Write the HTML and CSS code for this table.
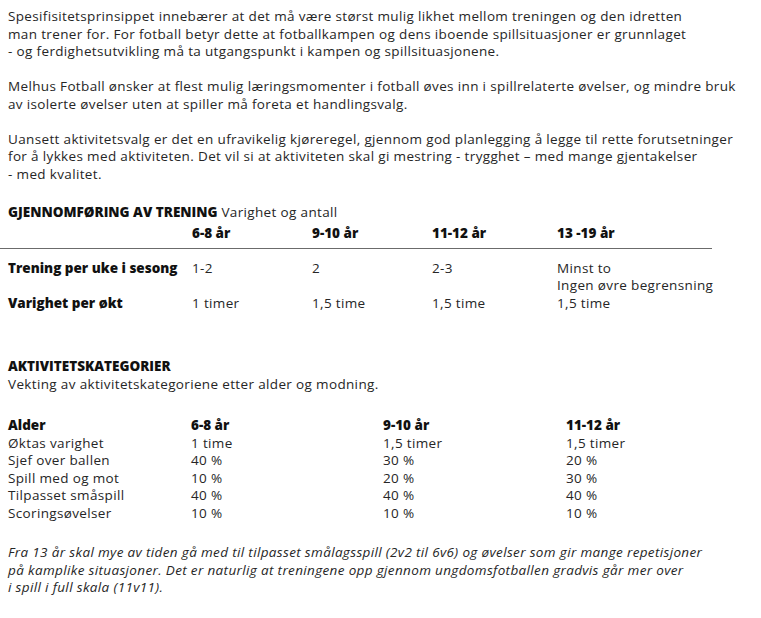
FILE: index.html
```html
<!DOCTYPE html>
<html lang="no">
<head>
<meta charset="utf-8">
<link rel="stylesheet" href="styles.css">
</head>
<body>
<div class="page">
  <p class="para">Spesifisitetsprinsippet innebærer at det må være størst mulig likhet mellom treningen og den idretten<br>man trener for. For fotball betyr dette at fotballkampen og dens iboende spillsituasjoner er grunnlaget<br>- og ferdighetsutvikling må ta utgangspunkt i kampen og spillsituasjonene.</p>
  <p class="para">Melhus Fotball ønsker at flest mulig læringsmomenter i fotball øves inn i spillrelaterte øvelser, og mindre bruk<br>av isolerte øvelser uten at spiller må foreta et handlingsvalg.</p>
  <p class="para">Uansett aktivitetsvalg er det en ufravikelig kjøreregel, gjennom god planlegging å legge til rette forutsetninger<br>for å lykkes med aktiviteten. Det vil si at aktiviteten skal gi mestring - trygghet – med mange gjentakelser<br>- med kvalitet.</p>

  <h2 class="heading plan-title"><b>GJENNOMFØRING AV TRENING</b> Varighet og antall</h2>
  <div class="plan">
    <div class="plan-head">
      <span></span><b>6-8 år</b><b>9-10 år</b><b>11-12 år</b><b>13 -19 år</b>
    </div>
    <div class="plan-row first">
      <b>Trening per uke i sesong</b><span>1-2</span><span>2</span><span>2-3</span><span>Minst to<br>Ingen øvre begrensning</span>
    </div>
    <div class="plan-row">
      <b>Varighet per økt</b><span>1 timer</span><span>1,5 time</span><span>1,5 time</span><span>1,5 time</span>
    </div>
  </div>

  <h2 class="heading cat">AKTIVITETSKATEGORIER</h2>
  <p class="sub">Vekting av aktivitetskategoriene etter alder og modning.</p>

  <div class="cats">
    <b>Alder</b><b>6-8 år</b><b>9-10 år</b><b>11-12 år</b>
    <span>Øktas varighet</span><span>1 time</span><span>1,5 timer</span><span>1,5 timer</span>
    <span>Sjef over ballen</span><span>40 %</span><span>30 %</span><span>20 %</span>
    <span>Spill med og mot</span><span>10 %</span><span>20 %</span><span>30 %</span>
    <span>Tilpasset småspill</span><span>40 %</span><span>40 %</span><span>40 %</span>
    <span>Scoringsøvelser</span><span>10 %</span><span>10 %</span><span>10 %</span>
  </div>

  <p class="note">Fra 13 år skal mye av tiden gå med til tilpasset smålagsspill (2v2 til 6v6) og øvelser som gir mange repetisjoner<br>på kamplike situasjoner. Det er naturlig at treningene opp gjennom ungdomsfotballen gradvis går mer over<br>i spill i full skala (11v11).</p>
</div>
</body>
</html>
```
FILE: styles.css
```css
html, body {
  margin: 0;
  padding: 0;
  background: #ffffff;
}
body {
  font-family: "Open Sans", "Noto Sans", sans-serif;
  font-size: 13.5px;
  letter-spacing: 0.35px;
  line-height: 17.5px;
  color: #262626;
}
.page {
  padding: 8px 0 0 0;
}
.para, .sub, .note, .heading {
  margin: 0 0 0 8px;
  white-space: nowrap;
}
.para {
  margin-bottom: 17.5px;
}
.heading {
  font-size: 13.5px;
  font-weight: 400;
  line-height: 17.5px;
}
.heading.plan-title {
  margin-top: 20.5px;
}
.heading b, .plan b, .cats b, .cat {
  font-weight: 800;
  letter-spacing: 0;
  color: #111;
}
.plan {
  width: 712px;
  white-space: nowrap;
}
.plan-head, .plan-row {
  display: grid;
  grid-template-columns: 184px 120px 120px 125px 1fr;
  padding-left: 8px;
}
.plan-head {
  padding-top: 4px;
  padding-bottom: 5px;
  border-bottom: 1.5px solid #6b6b6b;
}
.plan-row.first {
  margin-top: 11px;
}
.heading.cat {
  margin-top: 46px;
}
.cats {
  display: grid;
  grid-template-columns: 183px 192px 183px 1fr;
  margin: 24px 0 0 8px;
  white-space: nowrap;
}
.note {
  margin-top: 22px;
  font-style: italic;
}
```
